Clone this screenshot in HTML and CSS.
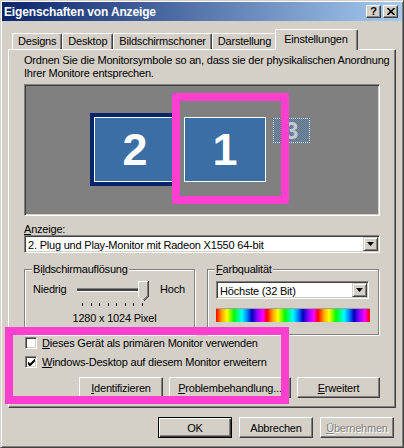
FILE: index.html
```html
<!DOCTYPE html>
<html lang="de">
<head>
    <meta charset="UTF-8">
    <title>Eigenschaften von Anzeige</title>
    <link rel="stylesheet" href="styles.css">
</head>
<body>
<div class="window">
    <!-- Title bar -->
    <div class="titlebar">
        <span class="title">Eigenschaften von Anzeige</span>
        <div class="title-buttons">
            <span class="title-btn">?</span>
            <span class="title-btn">
                <svg width="8" height="7" viewBox="0 0 8 7"><path d="M0.5 0 L7.5 7 M7.5 0 L0.5 7" stroke="#000" stroke-width="1.6"/></svg>
            </span>
        </div>
    </div>

    <!-- Tabs -->
    <div class="tabs">
        <div class="tab">Designs</div>
        <div class="tab">Desktop</div>
        <div class="tab">Bildschirmschoner</div>
        <div class="tab">Darstellung</div>
        <div class="tab active">Einstellungen</div>
    </div>

    <div class="panel">
        <p class="intro">Ordnen Sie die Monitorsymbole so an, dass sie der physikalischen Anordnung<br>Ihrer Monitore entsprechen.</p>

        <div class="monitor-area">
            <div class="monitor mon-2"><div class="mon-face">2</div></div>
            <div class="monitor mon-1"><div class="mon-face">1</div></div>
            <div class="monitor mon-3">3</div>
        </div>

        <div class="field-label"><u>A</u>nzeige:</div>
        <div class="select">
            <span class="select-text">2. Plug und Play-Monitor mit Radeon X1550 64-bit</span>
            <span class="select-btn"><svg width="7" height="4" viewBox="0 0 7 4"><path d="M0 0h7l-3.5 4z" fill="#000"/></svg></span>
        </div>

        <div class="groups">
            <fieldset class="group group-res">
                <legend>Bi<u>l</u>dschirmauflösung</legend>
                <div class="res-row">
                    <span class="res-low">Niedrig</span>
                    <div class="slider">
                        <div class="slider-track"></div>
                        <svg class="slider-thumb" width="11" height="21" viewBox="0 0 11 21" shape-rendering="crispEdges">
                            <path d="M0 0h11v15l-5.5 6l-5.5 -6z" fill="#d4d0c8"/>
                            <path d="M0.5 15.5V0.5H10" fill="none" stroke="#fff"/>
                            <path d="M0.5 15.5L5 20" fill="none" stroke="#fff"/>
                            <path d="M10.5 0V15.5L5.5 20.5" fill="none" stroke="#404040"/>
                            <path d="M9.5 1V15L5.5 19.2" fill="none" stroke="#808080"/>
                        </svg>
                    </div>
                    <span class="res-high">Hoch</span>
                </div>
                <svg class="ticks" width="62" height="3" viewBox="0 0 62 3">
                    <path d="M0.5 0v3M9.5 0v3M17.5 0v3M26.5 0v3M34.5 0v3M43.5 0v3M51.5 0v3M60.5 0v3" stroke="#000"/>
                </svg>
                <div class="res-value">1280 x 1024 Pixel</div>
            </fieldset>

            <fieldset class="group group-color">
                <legend><u>F</u>arbqualität</legend>
                <div class="select select-small">
                    <span class="select-text">Höchste (32 Bit)</span>
                    <span class="select-btn"><svg width="7" height="4" viewBox="0 0 7 4"><path d="M0 0h7l-3.5 4z" fill="#000"/></svg></span>
                </div>
                <div class="color-bar"></div>
            </fieldset>
        </div>

        <div class="checks">
            <div class="check">
                <span class="check-box"></span>
                <span class="check-label"><u>D</u>ieses Gerät als primären Monitor verwenden</span>
            </div>
            <div class="check">
                <span class="check-box">
                    <svg width="7" height="7" viewBox="0 0 7 7"><path d="M0 2.5L2 4.5L7 -0.5V2.5L2 7.5L0 5.5z" fill="#000"/></svg>
                </span>
                <span class="check-label"><u>W</u>indows-Desktop auf diesem Monitor erweitern</span>
            </div>
        </div>

        <div class="panel-buttons">
            <span class="btn btn-ident"><u>I</u>dentifizieren</span>
            <span class="btn btn-trouble"><u>P</u>roblembehandlung...</span>
            <span class="btn btn-adv"><u>E</u>rweitert</span>
        </div>
    </div>

    <div class="dialog-buttons">
        <span class="btn btn-default">OK</span>
        <span class="btn">Abbrechen</span>
        <span class="btn btn-disabled"><u>Ü</u>bernehmen</span>
    </div>

    <!-- highlight marks drawn over the dialog -->
    <div class="mark mark-monitors"></div>
    <div class="mark mark-options"></div>
</div>
</body>
</html>
```

FILE: styles.css
```css
/* Reset */
* {
    margin: 0;
    padding: 0;
    box-sizing: border-box;
}

body {
    font-family: 'Liberation Sans', Arial, sans-serif;
    font-size: 11px;
    letter-spacing: -0.2px;
    color: #000;
    background: #d4d0c8;
}

u {
    text-decoration: underline;
    text-underline-offset: 1px;
}

/* Window frame */
.window {
    position: relative;
    width: 404px;
    height: 448px;
    padding: 1px;
    background: #d4d0c8;
    border: 1px solid;
    border-color: #d4d0c8 #404040 #404040 #d4d0c8;
    box-shadow: inset 1px 1px #fff, inset -1px -1px #808080;
}

/* Title bar */
.titlebar {
    display: flex;
    justify-content: space-between;
    align-items: center;
    height: 19px;
    background: linear-gradient(90deg, #0a246a, #a6caf0);
}

.title {
    align-self: flex-start;
    padding: 3px 0 0 2px;
    color: #fff;
    font-weight: bold;
    font-size: 12px;
    line-height: 14px;
    letter-spacing: -0.15px;
}

.title-buttons {
    display: flex;
    gap: 2px;
    margin-right: 4px;
}

.title-btn {
    display: flex;
    align-items: center;
    justify-content: center;
    width: 15px;
    height: 13px;
    background: #d4d0c8;
    border: 1px solid;
    border-color: #fff #404040 #404040 #fff;
    box-shadow: inset -1px -1px #808080;
    font-weight: bold;
    font-size: 11px;
    line-height: 11px;
}

/* Tabs */
.tabs {
    position: relative;
    z-index: 1;
    display: flex;
    align-items: flex-end;
    height: 21px;
    margin: 8px 0 -1px 10px;
}

.tab {
    height: 16px;
    margin-bottom: 1px;
    padding: 0 5px;
    border: 1px solid;
    border-bottom: none;
    border-color: #fff #404040 #404040 #fff;
    border-radius: 2px 2px 0 0;
    box-shadow: inset -1px 0 #808080;
    line-height: 15px;
    white-space: nowrap;
}

.tab.active {
    height: 21px;
    margin: 0 -2px;
    padding: 2px 9px 0 8px;
    background: #d4d0c8;
    position: relative;
}

/* Tab page */
.panel {
    width: 388px;
    margin-left: 6px;
    padding: 4px 15px 9px;
    border: 1px solid;
    border-color: #fff #404040 #404040 #fff;
    box-shadow: inset -1px -1px #808080;
}

.intro {
    line-height: 13px;
    white-space: nowrap;
}

.monitor-area {
    position: relative;
    height: 132px;
    margin-top: 4px;
    background: #808080;
    border: 1px solid;
    border-color: #808080 #fff #fff #808080;
    box-shadow: inset 1px 1px #404040, inset -1px -1px #d4d0c8;
}

.monitor {
    position: absolute;
}

.mon-face {
    display: flex;
    align-items: center;
    justify-content: center;
    height: 100%;
    border: 1px solid #fff;
    background: #3a6ea5;
    color: #fff;
    font-weight: bold;
    font-size: 45px;
    line-height: 1;
    letter-spacing: 0;
}

.mon-2 {
    left: 65px;
    top: 28px;
    width: 90px;
    height: 73px;
    border: 4px solid #0a246a;
}

.mon-1 {
    left: 159px;
    top: 32px;
    width: 82px;
    height: 65px;
}

.mon-3 {
    left: 248px;
    top: 33px;
    width: 37px;
    height: 25px;
    display: flex;
    align-items: center;
    justify-content: center;
    border: 1px dotted #fff;
    background: repeating-conic-gradient(#4a74a0 0 25%, #8a8a8a 0 50%) 0 0 / 2px 2px;
    color: rgba(255, 255, 255, 0.6);
    font-weight: bold;
    font-size: 24px;
    line-height: 1;
}

.field-label {
    margin-top: 7px;
    line-height: 12px;
}

/* Combo box */
.select {
    display: flex;
    height: 18px;
    padding: 1px;
    background: #fff;
    border: 1px solid;
    border-color: #808080 #fff #fff #808080;
    box-shadow: inset 1px 1px #404040, inset -1px -1px #d4d0c8;
}

.select-text {
    flex: 1;
    padding: 1px 0 0 2px;
    line-height: 14px;
    white-space: nowrap;
    overflow: hidden;
}

.select-btn {
    display: flex;
    align-items: center;
    justify-content: center;
    width: 15px;
    height: 14px;
    background: #d4d0c8;
    border: 1px solid;
    border-color: #d4d0c8 #404040 #404040 #d4d0c8;
    box-shadow: inset 1px 1px #fff, inset -1px -1px #808080;
}

/* Group boxes */
.groups {
    display: flex;
    gap: 12px;
    margin-top: 10px;
}

.group {
    min-width: 0;
    border: 1px solid #808080;
    box-shadow: inset 1px 1px #fff, 1px 1px #fff;
}

.group legend {
    margin-left: 7px;
    padding: 0 1px;
    line-height: 12px;
    background: #d4d0c8;
}

.group-res {
    width: 171px;
    padding-bottom: 10px;
}

.group-color {
    width: 172px;
    padding-bottom: 12px;
}

.res-row {
    display: flex;
    height: 22px;
    margin: 6px 0 0 8px;
}

.res-low {
    width: 41px;
    flex-shrink: 0;
    margin-top: 2px;
    line-height: 12px;
}

.res-high {
    margin: 2px 0 0 4px;
    line-height: 12px;
}

.slider {
    position: relative;
    width: 82px;
    flex-shrink: 0;
}

.slider-track {
    position: absolute;
    left: 3px;
    top: 7px;
    width: 66px;
    height: 4px;
    background: #404040;
    border-top: 1px solid #808080;
    border-bottom: 1px solid #fff;
    border-right: 1px solid #fff;
}

.slider-thumb {
    position: absolute;
    left: 64px;
    top: 0;
}

.ticks {
    display: block;
    margin-left: 57px;
}

.res-value {
    margin-top: 6px;
    padding-left: 10px;
    line-height: 12px;
    text-align: center;
}

.select-small {
    width: 153px;
    margin: 6px 0 0 8px;
}

.color-bar {
    width: 154px;
    height: 14px;
    margin: 9px 0 0 8px;
    border-top: 1px solid #a0a0a0;
    background: repeating-linear-gradient(90deg,
        #f00 0px, #fa0 6px, #ff0 11px, #0f0 18px, #0ff 26px,
        #08f 31px, #00b 36px, #80f 41px, #f0f 47px, #f00 51px);
}

/* Check boxes */
.checks {
    display: flex;
    flex-direction: column;
    gap: 7px;
    margin-top: 2px;
}

.check {
    display: flex;
    height: 12px;
}

.check-box {
    display: flex;
    align-items: center;
    justify-content: center;
    width: 12px;
    height: 12px;
    margin-left: 1px;
    background: #fff;
    border: 1px solid;
    border-color: #808080 #fff #fff #808080;
    box-shadow: inset 1px 1px #404040, inset -1px -1px #d4d0c8;
}

.check-label {
    margin-left: 5px;
    line-height: 12px;
    white-space: nowrap;
}

/* Push buttons */
.panel-buttons {
    display: flex;
    justify-content: flex-end;
    gap: 6px;
    margin-top: 9px;
}

.btn {
    display: flex;
    align-items: center;
    justify-content: center;
    width: 74px;
    height: 21px;
    background: #d4d0c8;
    border: 1px solid;
    border-color: #fff #404040 #404040 #fff;
    box-shadow: inset -1px -1px #808080;
    white-space: nowrap;
}

.btn-ident { width: 84px; }
.btn-trouble { width: 122px; }
.btn-adv { width: 83px; }

.btn-default {
    border-color: #000;
    box-shadow: inset 1px 1px #fff, inset -1px -1px #404040, inset -2px -2px #808080;
}

.btn-disabled {
    color: #808080;
    text-shadow: 1px 1px #fff;
}

.dialog-buttons {
    display: flex;
    justify-content: flex-end;
    gap: 7px;
    margin-top: 9px;
    padding-right: 8px;
}

/* Highlight marks */
.mark {
    position: absolute;
    border: 8px solid #fd3fd0;
}

.mark-monitors {
    left: 171px;
    top: 92px;
    width: 117px;
    height: 111px;
}

.mark-options {
    left: 4px;
    top: 326px;
    width: 284px;
    height: 77px;
}
```
